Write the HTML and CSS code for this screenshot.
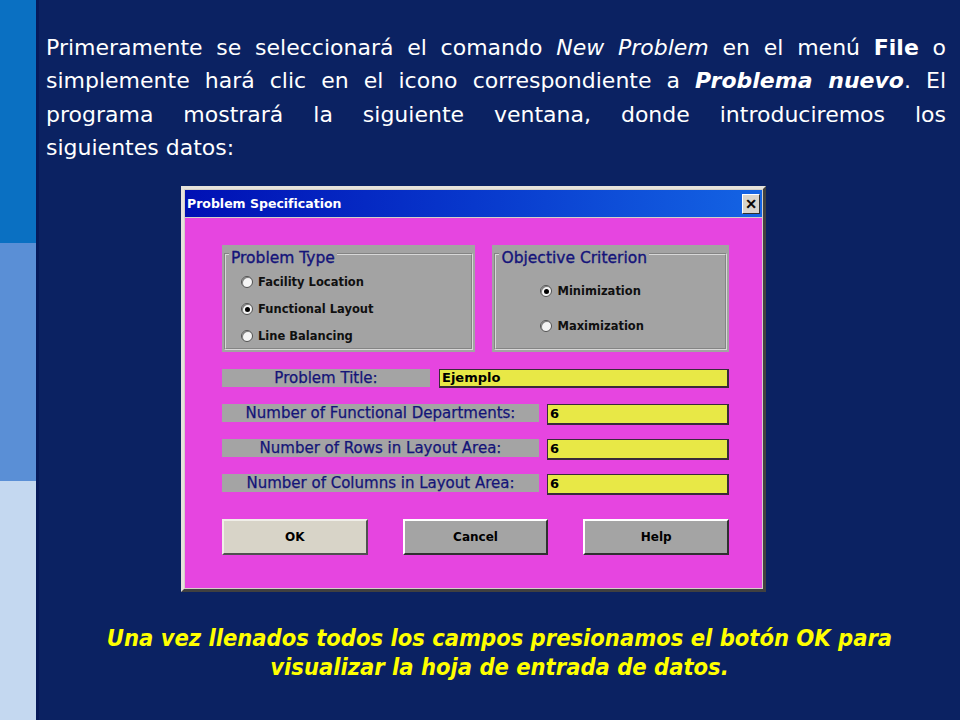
FILE: index.html
```html
<!DOCTYPE html>
<html lang="es">
<head>
<meta charset="utf-8">
<title>Problem Specification</title>
<link rel="stylesheet" href="styles.css">
</head>
<body>
<div class="page">
  <div class="stripes">
    <div class="s1"></div>
    <div class="s2"></div>
    <div class="s3"></div>
  </div>
  <div class="main">
    <div class="para">
      <div class="ln">Primeramente se seleccionará el comando <i>New Problem</i> en el menú <b>File</b> o</div>
      <div class="ln">simplemente hará clic en el icono correspondiente a <b><i>Problema nuevo</i></b>. El</div>
      <div class="ln">programa mostrará la siguiente ventana, donde introduciremos los</div>
      <div class="ln last">siguientes datos:</div>
    </div>

    <div class="dialog">
      <div class="titlebar">
        <span class="ttext">Problem Specification</span>
        <span class="close">✕</span>
      </div>
      <div class="dbody">
        <div class="groups">
          <div class="grp g1">
            <fieldset class="fs">
              <legend>Problem Type</legend>
              <div class="radios r1">
                <div class="rad"><span class="dot"></span>Facility Location</div>
                <div class="rad"><span class="dot on"></span>Functional Layout</div>
                <div class="rad"><span class="dot"></span>Line Balancing</div>
              </div>
            </fieldset>
          </div>
          <div class="grp g2">
            <fieldset class="fs">
              <legend>Objective Criterion</legend>
              <div class="radios r2">
                <div class="rad"><span class="dot on"></span>Minimization</div>
                <div class="rad"><span class="dot"></span>Maximization</div>
              </div>
            </fieldset>
          </div>
        </div>

        <div class="rows">
          <div class="row">
            <div class="lbl lshort">Problem Title:</div>
            <div class="inp ilong">Ejemplo</div>
          </div>
          <div class="row">
            <div class="lbl">Number of Functional Departments:</div>
            <div class="inp">6</div>
          </div>
          <div class="row">
            <div class="lbl">Number of Rows in Layout Area:</div>
            <div class="inp">6</div>
          </div>
          <div class="row">
            <div class="lbl">Number of Columns in Layout Area:</div>
            <div class="inp">6</div>
          </div>
        </div>

        <div class="buttons">
          <div class="btn ok">OK</div>
          <div class="btn">Cancel</div>
          <div class="btn">Help</div>
        </div>
      </div>
    </div>

    <div class="note">
      Una vez llenados todos los campos presionamos el botón OK para<br>
      visualizar la hoja de entrada de datos.
    </div>
  </div>
</div>
</body>
</html>
```
FILE: styles.css
```css
html, body {
  margin: 0;
  padding: 0;
}
body {
  background: #0b2262;
  width: 960px;
  height: 720px;
  overflow: hidden;
}
.page {
  display: flex;
  height: 720px;
}
.stripes {
  width: 36px;
  display: flex;
  flex-direction: column;
  border-right: 3px solid #06195a;
}
.s1 { height: 243px; background: #0a70c2; }
.s2 { height: 238px; background: #5a8fd6; }
.s3 { flex: 1; background: #c4d8f0; }

.main {
  flex: 1;
  display: flex;
  flex-direction: column;
}
.para {
  margin: 31px 14px 0 7px;
  color: #ffffff;
  font-family: "DejaVu Sans", sans-serif;
  font-size: 22px;
  line-height: 33.3px;
}
.ln {
  text-align: justify;
  text-align-last: justify;
  white-space: nowrap;
}
.ln.last {
  text-align-last: left;
}

.dialog {
  margin: 22px 0 0 142px;
  width: 579px;
  height: 400px;
  border: 3px solid;
  border-color: #e6e3dc #404040 #404040 #e6e3dc;
  background: #d4d0c8;
  display: flex;
  flex-direction: column;
}
.titlebar {
  height: 27px;
  margin: 1px 1px 0 1px;
  background: linear-gradient(90deg, #0010b4 0%, #0838cc 50%, #1464e4 100%);
  display: flex;
  align-items: center;
  justify-content: space-between;
  padding: 0 2px 0 2px;
}
.ttext {
  color: #ffffff;
  font-family: "DejaVu Sans", sans-serif;
  font-weight: bold;
  font-size: 12.5px;
}
.close {
  width: 16px;
  height: 18px;
  background: #d8d4cc;
  border: 1px solid;
  border-color: #ffffff #303030 #303030 #ffffff;
  color: #000;
  font-family: "DejaVu Sans", sans-serif;
  font-weight: bold;
  font-size: 14px;
  line-height: 18px;
  text-align: center;
  -webkit-text-stroke: 0.6px #000;
}
.dbody {
  flex: 1;
  margin: 1px;
  background: #e645e0;
  padding: 27px 33px 0 37px;
  font-family: "DejaVu Sans", sans-serif;
}
.groups {
  display: flex;
  gap: 17px;
  height: 107px;
}
.grp {
  background: #a3a3a3;
  padding: 0 2px 2px 2px;
}
.g1 { width: 250px; }
.g2 { width: 233px; }
.fs {
  margin: 0;
  height: 100%;
  box-sizing: border-box;
  border: 2px groove #d8d8d8;
  padding: 0;
}
.fs legend {
  color: #14147a;
  font-size: 15.5px;
  padding: 0 2px;
  margin-left: 3px;
  line-height: 17px;
  position: relative;
  top: 5px;
  background: #a3a3a3;
  -webkit-text-stroke: 0.35px #14147a;
}
.radios {
  display: flex;
  flex-direction: column;
}
.r1 { padding: 11px 0 0 15px; gap: 9px; }
.r2 { padding: 20px 0 0 44px; gap: 17px; }
.rad {
  display: flex;
  align-items: center;
  gap: 5px;
  font-size: 11.5px;
  font-weight: bold;
  color: #101010;
  height: 18px;
}
.dot {
  width: 10px;
  height: 10px;
  border-radius: 50%;
  background: #f4f4f4;
  border: 1px solid #505050;
  box-shadow: inset 1px 1px 0 #808080;
  display: flex;
  align-items: center;
  justify-content: center;
}
.dot.on::after {
  content: "";
  width: 5px;
  height: 5px;
  border-radius: 50%;
  background: #000;
}

.rows {
  margin-top: 17px;
  display: flex;
  flex-direction: column;
  gap: 15px;
}
.row {
  display: flex;
  gap: 8px;
  height: 20px;
  align-items: flex-start;
}
.lbl {
  width: 317px;
  height: 18px;
  background: #a4a4a4;
  color: #141478;
  font-size: 15px;
  line-height: 18px;
  text-align: center;
  -webkit-text-stroke: 0.25px #141478;
}
.lbl.lshort { width: 208px; margin-right: 1px; }
.inp {
  flex: 1;
  height: 19px;
  box-sizing: border-box;
  background: #e8e846;
  border: 2px solid #3a2a3a;
  border-width: 1px 2px 2px 1px;
  color: #000;
  font-size: 13px;
  font-weight: bold;
  line-height: 16px;
  padding-left: 2px;
}
.inp:not(.ilong) { height: 21px; line-height: 18px; }

.buttons {
  margin-top: 25px;
  display: flex;
  gap: 35px;
}
.btn {
  width: 142px;
  height: 32px;
  border: 2px solid;
  border-color: #ffffff #303030 #303030 #ffffff;
  background: #a4a4a4;
  font-size: 12px;
  font-weight: bold;
  color: #000;
  display: flex;
  align-items: center;
  justify-content: center;
}
.btn.ok {
  background: #d8d4c8;
  border-color: #f0eee8 #505050 #505050 #f0eee8;
}

.note {
  margin-top: 32px;
  color: #ffff00;
  text-align: center;
  font-family: "DejaVu Sans Condensed", "DejaVu Sans", sans-serif;
  font-weight: bold;
  font-style: italic;
  font-size: 23.5px;
  line-height: 29px;
}
```
